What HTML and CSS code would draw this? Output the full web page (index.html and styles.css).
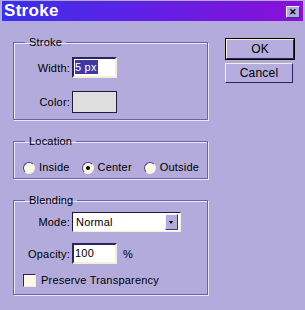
FILE: index.html
```html
<!DOCTYPE html>
<html lang="en">
<head>
    <meta charset="UTF-8">
    <title>Stroke</title>
    <link rel="stylesheet" href="styles.css">
</head>
<body>

    <div class="window">
        <!-- Title bar -->
        <div class="titlebar">
            <span class="title">Stroke</span>
            <span class="close-btn">&#x2715;</span>
        </div>

        <div class="dialog">
            <div class="left-col">

                <fieldset class="group stroke-group">
                    <legend>Stroke</legend>
                    <div class="form-row">
                        <label>Width:</label>
                        <div class="text-box"><span class="selected">5 px</span></div>
                    </div>
                    <div class="form-row color-row">
                        <label>Color:</label>
                        <div class="color-swatch"></div>
                    </div>
                </fieldset>

                <fieldset class="group location-group">
                    <legend>Location</legend>
                    <div class="radio-row">
                        <span class="radio-item"><span class="radio"></span>Inside</span>
                        <span class="radio-item"><span class="radio checked"></span>Center</span>
                        <span class="radio-item"><span class="radio"></span>Outside</span>
                    </div>
                </fieldset>

                <fieldset class="group blending-group">
                    <legend>Blending</legend>
                    <div class="form-row">
                        <label>Mode:</label>
                        <div class="select-box">
                            <span class="select-value">Normal</span>
                            <span class="select-arrow"></span>
                        </div>
                    </div>
                    <div class="form-row opacity-row">
                        <label>Opacity:</label>
                        <div class="text-box">100</div>
                        <span class="unit">%</span>
                    </div>
                    <div class="check-row">
                        <span class="checkbox"></span>Preserve Transparency
                    </div>
                </fieldset>

            </div>

            <div class="right-col">
                <div class="button default">OK</div>
                <div class="button">Cancel</div>
            </div>
        </div>
    </div>

</body>
</html>
```

FILE: styles.css
```css
body {
    margin: 0;
    background: #b2abdc;
    font-family: "Liberation Sans", Arial, sans-serif;
    font-size: 11px;
    letter-spacing: 0.2px;
    color: #000;
}

.window {
    width: 305px;
    height: 310px;
    overflow: hidden;
}

.titlebar {
    height: 20px;
    margin: 1px 2px 0 2px;
    background: linear-gradient(90deg, #3a30ea, #6a1ce2 60%, #8a0fd8);
    display: flex;
    align-items: center;
    justify-content: space-between;
    padding: 0 3px 0 2px;
}

.title {
    color: white;
    font-weight: bold;
    font-size: 17px;
    letter-spacing: 0.3px;
}

.close-btn {
    width: 12px;
    height: 10px;
    background: #b2abdc;
    border: 1px solid;
    border-color: #f2f0fa #3a3470 #3a3470 #f2f0fa;
    font-size: 9px;
    font-weight: bold;
    line-height: 10px;
    text-align: center;
    margin-top: 1px;
    letter-spacing: 0;
}

.dialog {
    display: flex;
    padding: 15px 0 0 13px;
}

.left-col {
    width: 195px;
}

.group {
    margin: 0 0 15px 0;
    padding: 0 6px 6px 0;
    border: 1px solid #6a62ae;
    box-shadow: inset 1px 1px 0 #ebe8f8, 1px 1px 0 #ebe8f8;
    min-width: 0;
}

.group legend {
    margin-left: 11px;
    padding: 0 4px;
    line-height: 13px;
}

.form-row {
    display: grid;
    grid-template-columns: 56px max-content max-content;
    column-gap: 2px;
    align-items: center;
    margin-top: 8px;
}

.form-row label {
    justify-self: end;
}

.color-row {
    margin-top: 13px;
}

.text-box {
    width: 40px;
    height: 17px;
    background: white;
    border: 2px solid;
    border-color: #2a2560 #f4f0d8 #f4f0d8 #2a2560;
    line-height: 17px;
    padding-left: 1px;
}

.selected {
    background: #3e38a4;
    color: white;
    padding: 1px 1px 1px 0;
}

.color-swatch {
    width: 43px;
    height: 20px;
    background: #dedede;
    border: 1px solid #1c1a40;
}

.location-group {
    padding-bottom: 4px;
}

.radio-row {
    display: flex;
    margin: 13px 0 0 9px;
    gap: 12px;
}

.radio-item {
    display: flex;
    align-items: center;
    gap: 4px;
    line-height: 13px;
}

.radio {
    width: 10px;
    height: 10px;
    border-radius: 50%;
    background: #fbf9e6;
    border: 1px solid;
    border-color: #4a4488 #f4f0d8 #f4f0d8 #4a4488;
    position: relative;
}

.radio.checked::after {
    content: "";
    position: absolute;
    left: 3px;
    top: 3px;
    width: 4px;
    height: 4px;
    border-radius: 50%;
    background: black;
}

.blending-group .form-row {
    margin-top: 5px;
}

.select-box {
    width: 104px;
    height: 18px;
    background: white;
    border: 1px solid #1c1a40;
    border-right-color: #f4f0d8;
    border-bottom-color: #f4f0d8;
    display: flex;
    align-items: center;
    justify-content: space-between;
    padding-left: 3px;
}

.select-arrow {
    width: 11px;
    height: 14px;
    margin-right: 2px;
    background: #b2abdc;
    border: 1px solid;
    border-color: #f2f0fa #3a3470 #3a3470 #f2f0fa;
    position: relative;
}

.select-arrow::after {
    content: "";
    position: absolute;
    left: 3px;
    top: 6px;
    border-left: 2.5px solid transparent;
    border-right: 2.5px solid transparent;
    border-top: 3px solid black;
}

.blending-group .opacity-row {
    margin-top: 11px;
}

.unit {
    margin-left: 4px;
}

.check-row {
    display: flex;
    align-items: center;
    gap: 5px;
    margin: 9px 0 1px 9px;
    line-height: 14px;
}

.checkbox {
    width: 11px;
    height: 11px;
    background: #fbf9e6;
    border: 1px solid;
    border-color: #2a2560 #f4f0d8 #f4f0d8 #2a2560;
}

.right-col {
    margin-left: 17px;
    padding-top: 2px;
    display: flex;
    flex-direction: column;
    gap: 3px;
}

.button {
    width: 66px;
    height: 18px;
    line-height: 18px;
    text-align: center;
    background: #b4addd;
    border: 1px solid;
    border-color: #f4f0d0 #2a2560 #2a2560 #f4f0d0;
    font-size: 12px;
}

.button.default {
    outline: 1px solid black;
    outline-offset: 0;
    margin: 1px;
    width: 66px;
}
```
